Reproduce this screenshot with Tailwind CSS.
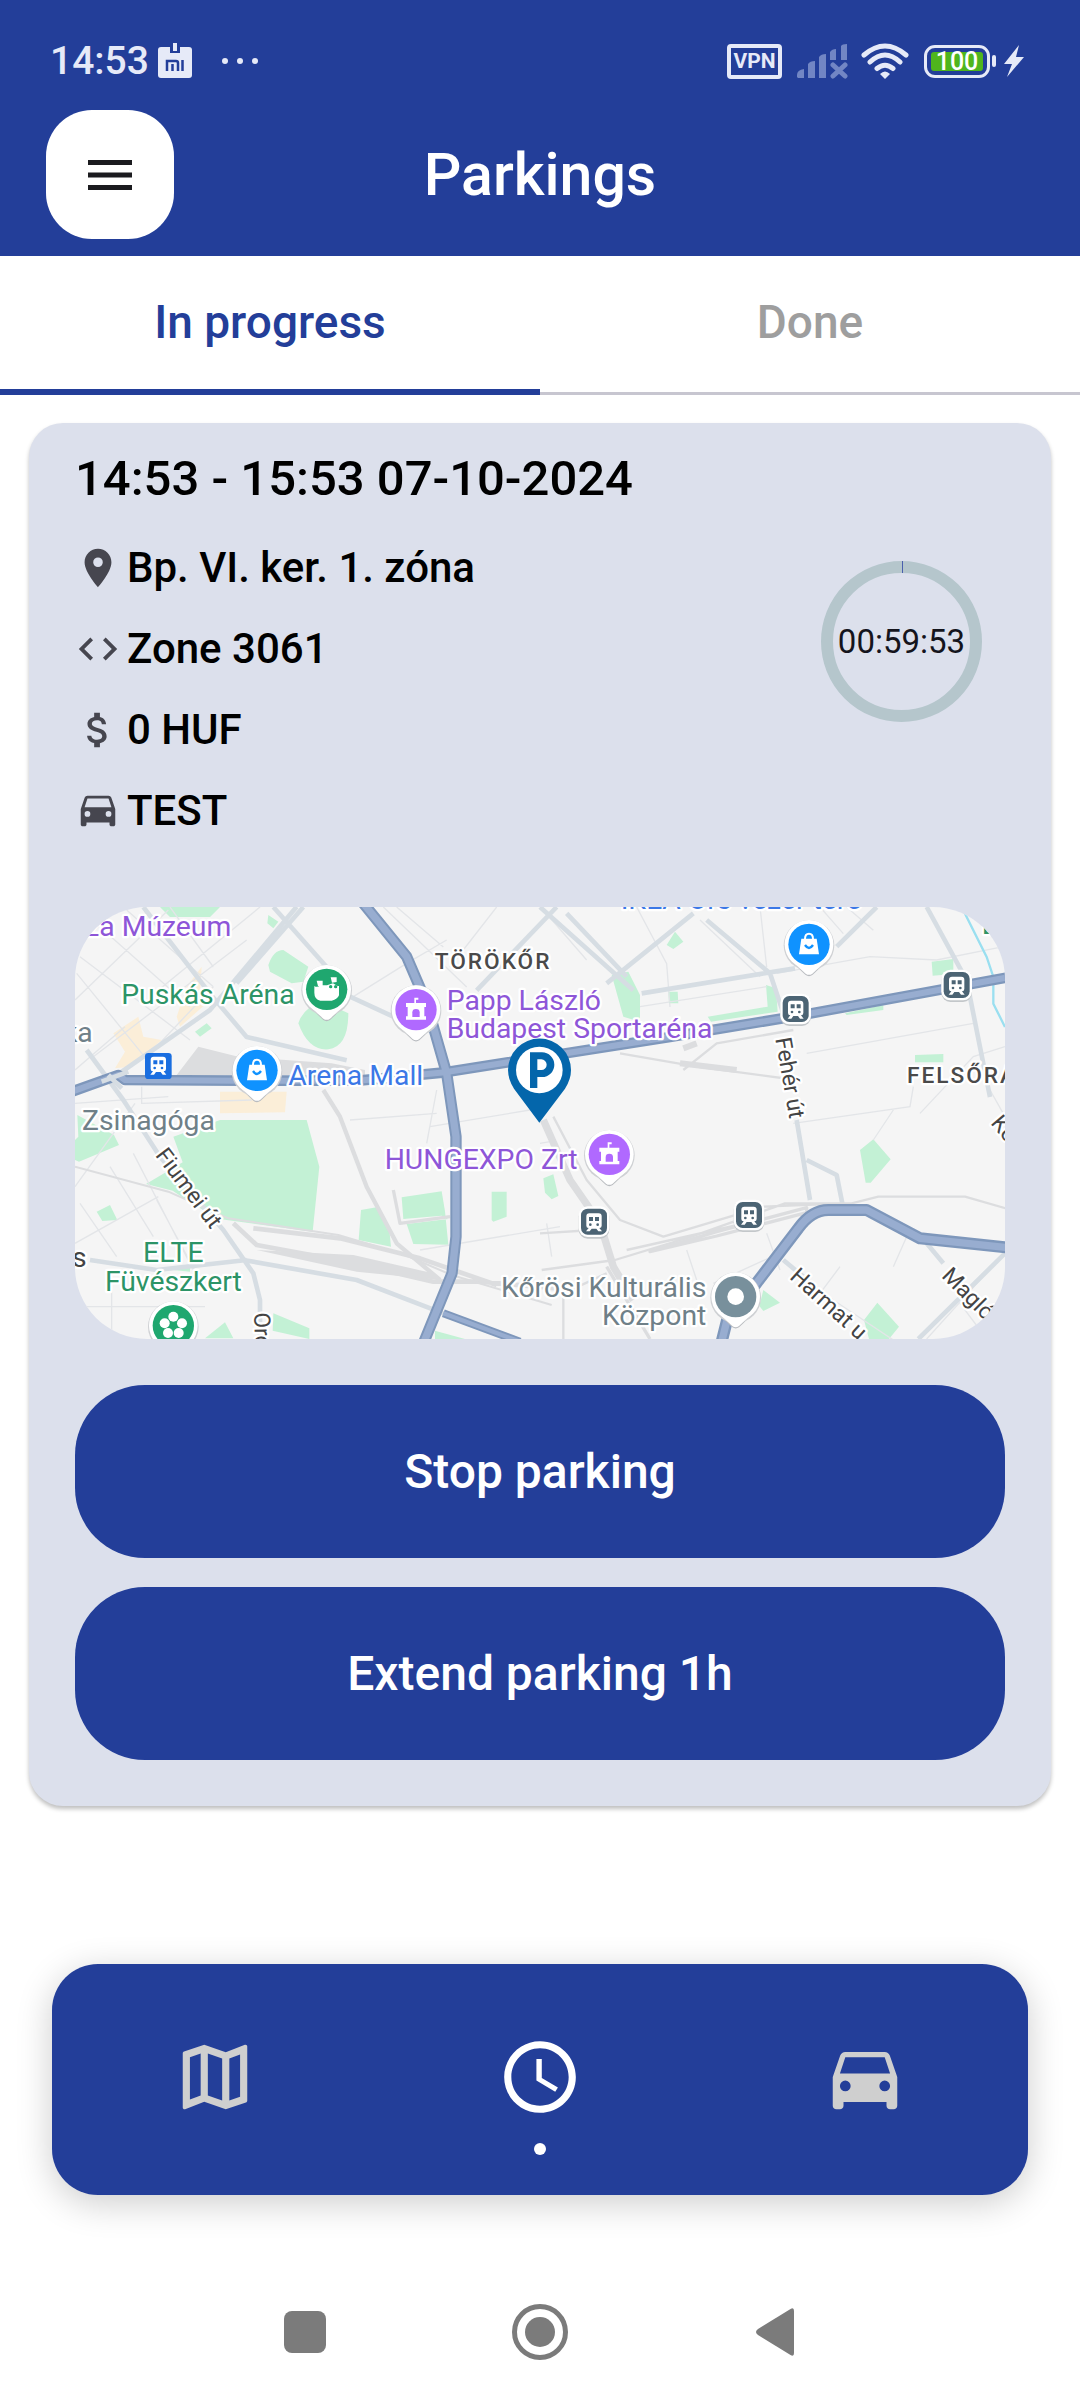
<!DOCTYPE html>
<html lang="en">
<head>
<meta charset="utf-8">
<meta name="viewport" content="width=device-width, initial-scale=1">
<title>Parkings</title>
<script src="https://cdn.jsdelivr.net/npm/@tailwindcss/browser@4"></script>
</head>
<body class="bg-white">
<div class="flex min-h-screen flex-col font-['Roboto',sans-serif] font-medium text-black">

  <header class="flex flex-col bg-[#233e99] text-white">
    <!-- status bar -->
    <div class="flex h-[110px] items-center justify-between pt-3 pr-14 pl-[50px] text-[#e6eaf8]">
      <div class="flex items-center">
        <span class="text-[39px] leading-[48px]">14:53</span>
        <svg class="ml-2 h-9 w-9" viewBox="0 0 36 36" aria-hidden="true">
          <rect x="1" y="4" width="34" height="31" rx="3" fill="currentColor"/>
          <path d="M13 3h10v7H13z" fill="#233e99"/><path d="M16 0h4v8h-4z" fill="currentColor"/>
          <path d="M10 28V18h9q2 0 2 2v8M15.500 21v7M25.500 17v11" fill="none" stroke="#233e99" stroke-width="2.500"/>
        </svg>
        <svg class="ml-7 h-2 w-10" viewBox="0 0 40 8" fill="currentColor" aria-hidden="true"><circle cx="4" cy="4" r="3"/><circle cx="19" cy="4" r="3"/><circle cx="34" cy="4" r="3"/></svg>
      </div>
      <div class="flex items-center">
        <span class="flex h-[35px] w-[55px] items-center justify-center rounded-[4px] border-4 border-[#e6eaf8] text-[21px] leading-none font-bold">VPN</span>
        <svg class="ml-[14px] h-9 w-[52px]" viewBox="0 0 52 36" fill="#7286c4" aria-hidden="true">
          <path d="M1 34v-2q0-5 7-6v9H2zM12 35V21q2-3 7-3v17zM23 35V14q2-3 7-3v24zM34 17V9q2-3 6-3v11zM45 17V3q1-2 6-2v16z"/>
          <path d="M37 22l12 11M49 22L37 33" stroke="#7286c4" stroke-width="5" stroke-linecap="round"/>
        </svg>
        <svg class="ml-3 h-9 w-[50px]" viewBox="0 0 50 36" fill="none" stroke="currentColor" stroke-width="5" stroke-linecap="round" aria-hidden="true">
          <path d="M4 12Q25-6 46 12M10 19Q25 5 40 19M17 25.500Q25 19 33 25.500"/><path d="M20 31q5-5 10 0l-5 5z" fill="currentColor" stroke="none"/>
        </svg>
        <span class="ml-[14px] flex h-[33px] w-[66px] items-center rounded-[11px] border-[3px] border-[#e6eaf8] p-1">
          <span class="flex h-full w-full items-center justify-center rounded-[3px] bg-[#4fb51d] text-[25px] leading-none text-white">100</span>
        </span>
        <span class="ml-[2px] h-3 w-1 rounded-full bg-[#e6eaf8]"></span>
        <svg class="ml-2 h-8 w-5" viewBox="0 0 20 32" fill="currentColor" aria-hidden="true"><path d="M15 0L0 19h8L3 32 20 12h-8z"/></svg>
      </div>
    </div>
    <!-- title bar -->
    <div class="grid h-[146px] grid-cols-[128px_1fr_128px] items-start px-[46px]">
      <button type="button" aria-label="Open menu" class="flex h-[129px] w-[128px] items-center justify-center rounded-[46px] bg-white text-[#1b1b1f]">
        <svg class="h-[30px] w-11" viewBox="0 0 44 30" fill="currentColor" aria-hidden="true"><path d="M0 0h44v5H0zM0 12.500h44v5H0zM0 25h44v5H0z"/></svg>
      </button>
      <h1 class="text-center text-[59px] leading-[129px]">Parkings</h1>
    </div>
  </header>

  <div role="tablist" class="grid h-[139px] grid-cols-2 text-[46px]">
    <button type="button" role="tab" aria-selected="true" class="border-b-[6px] border-[#233e99] text-[#233e99]">In progress</button>
    <button type="button" role="tab" aria-selected="false" class="border-b-[3px] border-[#c7c6d0] pb-[3px] text-[#9e9e9e]">Done</button>
  </div>

  <main class="mx-[29px] mt-7 rounded-[34px] bg-[#dce0ec] px-[46px] pt-7 pb-[46px] shadow-[0_3px_4px_rgba(0,0,0,0.25)]">
    <h2 class="text-[49px] leading-[56px]">14:53 - 15:53 07-10-2024</h2>

    <div class="mt-5 flex items-start justify-between text-[42px]">
      <ul>
        <li class="flex h-[81px] items-center gap-[6px]">
          <svg class="h-[46px] w-[46px] text-[#46464f]" viewBox="0 0 24 24" fill="currentColor" aria-hidden="true"><path d="M12 2C8.130 2 5 5.130 5 9c0 5.250 7 13 7 13s7-7.750 7-13c0-3.870-3.130-7-7-7zm0 9.500a2.500 2.500 0 1 1 0-5 2.500 2.500 0 0 1 0 5z"/></svg>
          Bp. VI. ker. 1. zóna
        </li>
        <li class="flex h-[81px] items-center gap-[6px]">
          <svg class="h-[46px] w-[46px] text-[#46464f]" viewBox="0 0 24 24" fill="currentColor" aria-hidden="true"><path d="M9.400 16.600L4.800 12l4.600-4.600L8 6l-6 6 6 6 1.400-1.400zm5.200 0l4.600-4.600-4.600-4.600L16 6l6 6-6 6-1.400-1.400z"/></svg>
          Zone 3061
        </li>
        <li class="flex h-[81px] items-center gap-[6px]">
          <svg class="h-[46px] w-[46px] text-[#46464f]" viewBox="0 0 24 24" fill="currentColor" aria-hidden="true"><path d="M11.800 10.900c-2.270-.59-3-1.200-3-2.150 0-1.090 1.010-1.850 2.700-1.850 1.780 0 2.440.85 2.500 2.100h2.210c-.07-1.720-1.120-3.300-3.210-3.810V3h-3v2.160c-1.940.42-3.500 1.680-3.500 3.610 0 2.310 1.910 3.460 4.700 4.130 2.500.6 3 1.480 3 2.410 0 .69-.49 1.790-2.700 1.790-2.060 0-2.870-.92-2.980-2.100h-2.200c.12 2.190 1.760 3.420 3.680 3.830V21h3v-2.150c1.950-.37 3.500-1.500 3.500-3.550 0-2.840-2.430-3.810-4.700-4.400z"/></svg>
          0 HUF
        </li>
        <li class="flex h-[81px] items-center gap-[6px]">
          <svg class="h-[46px] w-[46px] text-[#46464f]" viewBox="0 0 24 24" fill="currentColor" aria-hidden="true"><path d="M18.920 5.010C18.720 4.420 18.160 4 17.500 4h-11c-.66 0-1.210.42-1.420 1.010L3 11v8c0 .55.45 1 1 1h1c.55 0 1-.45 1-1v-1h12v1c0 .55.45 1 1 1h1c.55 0 1-.45 1-1v-8l-2.080-5.990zM6.500 15a1.500 1.500 0 1 1 0-3 1.500 1.500 0 0 1 0 3zm11 0a1.500 1.500 0 1 1 0-3 1.500 1.500 0 0 1 0 3zM5 10l1.500-4.500h11L19 10H5z"/></svg>
          TEST
        </li>
      </ul>
      <div role="timer" class="relative mt-[34px] mr-[23px] flex h-[161px] w-[161px] items-center justify-center rounded-full border-[12px] border-[#b5c6cc]">
        <span class="text-[33px] leading-none font-normal whitespace-nowrap text-[#14141c]">00:59:53</span>
        <span class="absolute -top-3 left-1/2 h-3 w-px bg-[#4a5fae]"></span>
      </div>
    </div>

    <div class="mt-14 overflow-hidden rounded-[72px]">
      <svg class="block w-full" viewBox="45 51 2790 1296" role="img" aria-label="Map of the parking location">
        <defs>
          <g id="pin"><path d="M-64 37Q-30 74-10 92Q0 99 10 92Q30 74 64 37z" fill="#b9bcc0"/><circle cy="3" r="76" fill="#cfd1d4"/><path d="M-60 40Q-30 70-10 88Q0 95 10 88Q30 70 60 40z" fill="#fff"/><circle r="73" fill="#fff"/></g>
          <g id="hall" fill="#fff"><path d="M-5-20v-16H7v6H0v10h30v12h-5v28h5v10h-60v-10h5V-8h-5v-12z"/><path d="M-11 22V8q0-10 11-10T11 8v14z" fill="#b069ff"/></g>
          <g id="bag"><path d="M-23-17h46l7 47h-60z" fill="#fff"/><path d="M-12-16q0-16 12-16t12 16" fill="none" stroke="#fff" stroke-width="6"/><path d="M-12 2q12 18 24 0" fill="none" stroke="#0f92ff" stroke-width="7"/></g>
          <g id="train" fill="#fff"><path d="M-23-17q0-9 9-9h28q9 0 9 9v28q0 7-7 7l8 10H13l-6-8H-7l-6 8h-11l8-10q-7 0-7-7z"/></g>
          <g id="trainwin"><path d="M-15-15h12v12h-12zM3-15h12v12H3z"/><circle cx="-11" cy="8" r="4"/><circle cx="11" cy="8" r="4"/></g>
          <g id="station"><rect x="-46" y="-44" width="92" height="94" rx="27" fill="#c3c7ca"/><rect x="-46" y="-47" width="92" height="92" rx="27" fill="#fff"/><rect x="-39" y="-40" width="78" height="78" rx="20" fill="#4c6474"/><use href="#train"/><use href="#trainwin" fill="#4c6474"/></g>
        </defs>
        <path fill="#f5f5f5" d="M45 51h2790v1296H45z"/>

        <!-- parks -->
        <g fill="#c3f1d5">
          <path d="M300 51h180l-30 30H330zM625 75l30 20-15 20-18-15zM625 225q15-45 45-45l75 50-15 45-35 5-65-35zM715 400q15-50 75-65l75 35q0 100-60 108-60 5-90-78zM405 425l35-25 15 15-35 25zM52 675l110 60 15 30-120 50-12-5v-60l10-10zM340 740l140-50h260l38 140-20 195-280-38-80-45-60-40-80-20 110-65zM110 965l40-20 22 45-45 3zM903 960l55-10 30 70 5 50-97-20zM1025 922l120-18 10 60 10 100-105-2-20-60 125-15-20-10-115 10zM1295 905h45v75l-40 15-5-5zM1450 865l30-12 15 65-20 10-20-20zM435 1345l60-48 25 48zM640 1270l108 45v32l-110-25zM1125 1322l90 25h-90zM340 1140l50-15v20zM1820 165l25-40 25 30-30 22zM1655 255l50-10 35 70v80l-50-15zM1825 305h28l2 35h-28zM2118 285l30 10 5 70-200 30-10-15 180-30zM2615 215l65-8v45l-62 5zM2565 495l85-3v25h-85zM2355 370l115-25v15l-110 15zM2400 780l40-32 52 60-60 70h-15zM2110 1200l50 38-50 25-12-15zM2412 1290l40-52 65 72-30 37h-60z"/>
        </g>
        <g fill="#fbeed8"><path d="M480 605h200l-5 62-195 3zM160 430l75-50 15 60 55 10-90 80-50 5 30-50zM350 380l30-90 45-60-5 80 20 30-80 70z"/></g>

        <!-- minor streets -->
        <g fill="none" stroke="#e3e5e8" stroke-width="4">
          <path d="M45 330l280-270M60 200l330 250M130 120l260 230M200 60l260 230M50 250l220 270M330 51l130 180M100 500L560 150M45 540l150-130M280 480l180-190M600 51l-330 270M880 320l160-100 120-70M970 51l250 240M1010 51l140 120M245 590v50l330-10M45 640l280-20M45 890l180-250M150 830l130 210M220 790l180 350M290 930l130 240M45 1060l250-140M60 940l110 160M45 1250h390M155 1200v147M870 690l260-20M1110 710l300-50M1130 600l-30 160M1080 1080l420-70M1440 760l30-5M1460 1000l15 100M1310 51l-140 180M1450 60l130 150M1730 51l90 170 10 130M1740 350l380-60M2100 51l20 180M1920 90l180 170M2150 250l280-50 200 10 200-40M2240 490l500-90M2200 700l350-50 10-60M2440 750l60-90M2280 51l70 80M2360 51l80 70M2580 670l160-170 95-30M2790 600l45 80M2120 1030l40 110M2170 1110l150 120 180 120M2280 1210l60-80M2180 1080l-220 100M1880 1080l40 120M2600 1347l235-260M2700 1240l60 80M2500 1130l40-90"/>
        </g>
        <!-- secondary roads -->
        <g fill="none" stroke="#d6dde3" stroke-width="14" stroke-linejoin="round">
          <path d="M730 51L530 280M150 570l300-210 260-310M250 51l200 260 110 130 300 70M640 51l160 180M870 320l130 60M80 480l110 150 110 170 190 220 90 130 20 80v117M90 1110l200 30 270-30M550 1110l340 60 260 100M1490 51l-240 250M1440 51l280 250M1520 70l180 190M1900 70L1640 280M1940 90l190 160 50 150M1745 310l460-75M2330 170l120-119M2600 51l120 220 70 350M2210 690l40 240M2240 810l90 45 20 100M2170 1110l60 50M2600 1060l50 60M2835 1090l-260 257"/>
        </g>

        <!-- railway yards -->
        <g fill="none" stroke="#dcdddf" stroke-linejoin="round">
          <path d="M415 470l120 30 280 20 100 20v15H350z" fill="#dcdddf" stroke="none"/>
          <path d="M520 1000l70 65 270 50 260 60h140l230 20M580 1015l260 30 240 60 230 80" stroke-width="14"/>
          <path d="M590 1080l300 65 250 25-20-20-240-55z" fill="#dcdddf" stroke="none"/>
          <path d="M45 830l280 75 180 80 330 50 200 60 140 60 300 90" stroke-width="6"/>
          <path d="M790 600l50 80 80 210 90 170 130 110" stroke-width="13"/><path d="M1450 690l80 180 90 130 40 130 60 100" stroke-width="22"/>
          <path d="M1480 680l100 190 100 120 130 50 300-90 250-10M1440 1030l160-10M1445 1140l220-30 230-70 280-100h200l80-20h260l140 40M1700 1080l400-90M1640 1150l-130 60v137M1680 490l230 40 300 40M1870 540l100-80 230-40" stroke-width="7"/>
          <path d="M1770 1085l200-60 270-72v15l-270 70z" stroke-width="10"/><path d="M1640 1130l130 217M1000 900l20 100 150-20" stroke-width="10"/>
          <path d="M1860 520l170 20M1870 475l40-15" stroke-width="18"/>
        </g>
        <path d="M2705 51l75 150 20 60v80l35 70" fill="none" stroke="#9adff0" stroke-width="7"/>

        <!-- main roads -->
        <g fill="none" stroke="#7e97bb" stroke-width="34" stroke-linejoin="round">
          <path d="M910 40l130 160 60 140 60 210 28 190v300l-12 110-90 220"/>
          <path d="M35 605l140-50 20 15 350 2h350l260-25 190-30 480-75 390-65 640-117" stroke-width="32"/>
          <path d="M1150 1270l230 85" stroke-width="24"/>
          <path d="M1985 1355l20-80 80-90 130-170q40-55 90-55h115l160 85 265 28" stroke-width="36"/>
        </g>
        <g fill="none" stroke="#98add0" stroke-width="22" stroke-linejoin="round">
          <path d="M910 40l130 160 60 140 60 210 28 190v300l-12 110-90 220"/>
          <path d="M35 605l140-50 20 15 350 2h350l260-25 190-30 480-75 390-65 640-117" stroke-width="18"/>
          <path d="M1150 1270l230 85" stroke-width="13"/>
          <path d="M1985 1355l20-80 80-90 130-170q40-55 90-55h115l160 85 265 28" stroke-width="22"/>
        </g>
        <path d="M125 575l80-30M145 555l40 40" stroke="#d6dde3" stroke-width="14"/>

        <!-- labels -->
        <g font-size="85" font-weight="400" stroke="#fff" stroke-width="14" stroke-linejoin="round" paint-order="stroke">
          <g fill="#8e56d8">
            <text x="514" y="138" text-anchor="end">za Múzeum</text>
            <text x="1160" y="360">Papp László</text><text x="1160" y="444">Budapest Sportaréna</text>
            <text x="974" y="837">HUNGEXPO Zrt</text>
          </g>
          <g fill="#2c9467">
            <text x="704" y="342" text-anchor="end">Puskás Aréna</text>
            <text x="340" y="1117" text-anchor="middle">ELTE</text><text x="340" y="1203" text-anchor="middle">Füvészkert</text>
            <text x="2765" y="133">E</text>
          </g>
          <g fill="#3b78e7"><text x="685" y="584">Arena Mall</text><text x="1682" y="58">IKEA Örs vezér tere</text></g>
          <g fill="#6f8088">
            <text x="98" y="457" text-anchor="end">ka</text><text x="66" y="720">Zsinagóga</text>
            <text x="1939" y="1221" text-anchor="end">Kőrösi Kulturális</text><text x="1939" y="1306" text-anchor="end">Központ</text>
          </g>
          <g fill="#444" font-size="68">
            <text x="36" y="1132" font-size="85">s</text>
            <text transform="translate(284 796) rotate(53)">Fiumei út</text>
            <text transform="translate(582 1268) rotate(88)">Orczy</text>
            <text transform="translate(2146 446) rotate(80)">Fehér út</text>
            <text transform="translate(2186 1164) rotate(42)">Harmat u</text>
            <text transform="translate(2642 1160) rotate(45)">Magló</text>
            <text transform="translate(2790 700) rotate(50)">Ke</text>
          </g>
          <g fill="#4a4a4a" font-size="68" font-weight="500">
            <text class="tracking-[6px]" x="1124" y="236">TÖRÖKŐR</text><text class="tracking-[6px]" x="2541" y="578">FELSŐRÁKOS</text>
          </g>
        </g>

        <!-- places -->
        <g transform="translate(800 298)"><use href="#pin"/><circle r="62" fill="#1fa76f"/><path d="M-37-10q8 6 18-2h20l18-6 14 8h4v28q-4 12-22 16h-34q-18-4-18-24zM-30-26h18v16h-14zM12-36h18v14l-14 2z" fill="#fff"/><circle cx="12" cy="-8" r="5" fill="#1fa76f"/><circle cx="27" cy="-8" r="5" fill="#1fa76f"/></g>
        <g transform="translate(1068 359)"><use href="#pin"/><circle r="62" fill="#b069ff"/><use href="#hall"/></g>
        <g transform="translate(1648 793)"><use href="#pin"/><circle r="62" fill="#b069ff"/><use href="#hall"/></g>
        <g transform="translate(591 541)"><use href="#pin"/><circle r="62" fill="#0f92ff"/><use href="#bag"/></g>
        <g transform="translate(2247 163)"><use href="#pin"/><circle r="62" fill="#0f92ff"/><use href="#bag"/></g>
        <g transform="translate(2027 1220)"><use href="#pin"/><circle r="62" fill="#78909c"/><circle r="25" fill="#fff"/></g>
        <g transform="translate(340 1307)"><use href="#pin"/><circle r="62" fill="#1fa76f"/><g fill="#fff"><circle cy="-27" r="15"/><circle cx="26" cy="-7" r="15"/><circle cx="-26" cy="-7" r="15"/><circle cx="16" cy="22" r="15"/><circle cx="-16" cy="22" r="15"/></g></g>
        <rect x="255" y="489" width="80" height="78" rx="10" fill="#1a6ee0"/>
        <g transform="translate(295 526)"><use href="#train"/><use href="#trainwin" fill="#1a6ee0"/></g>
        <use href="#station" x="2207" y="358"/><use href="#station" x="2690" y="286"/><use href="#station" x="1602" y="996"/><use href="#station" x="2067" y="976"/>

        <!-- parked car position -->
        <path d="M1438 698L1362 596Q1344 568 1344 540a94 94 0 0 1 189 0q0 28-18 56z" fill="#0466ab"/>
        <circle cx="1438" cy="540" r="70" fill="#fff"/>
        <path d="M1410 487h36a37 37 0 0 1 0 74h-14v33h-22zM1432 508v32h12a16 16 0 0 0 0-32z" fill="#0466ab" fill-rule="evenodd"/>
      </svg>
    </div>

    <div class="mt-[46px] flex flex-col gap-[29px] text-[48px] text-white">
      <button type="button" class="h-[173px] rounded-[70px] bg-[#233e99]">Stop parking</button>
      <button type="button" class="h-[173px] rounded-[70px] bg-[#233e99]">Extend parking 1h</button>
    </div>
  </main>

  <nav aria-label="Main" class="mx-[52px] mt-auto grid h-[231px] grid-cols-3 rounded-[46px] bg-[#233e99] text-[#cfcfcf] shadow-[0_8px_36px_rgba(0,0,0,0.2)]">
    <a href="#map" aria-label="Map" class="flex flex-col items-center pt-[70px]">
      <svg class="h-[86px] w-[86px]" viewBox="0 0 24 24" fill="currentColor" aria-hidden="true"><path d="M20.500 3l-.16.03L15 5.100 9 3 3.360 4.900c-.21.07-.36.25-.36.48V20.500c0 .28.22.5.5.5l.16-.03L9 18.900l6 2.100 5.640-1.900c.21-.07.36-.25.36-.48V3.500c0-.28-.22-.5-.5-.5zM10 5.470l4 1.400v11.660l-4-1.400V5.470zm-5 .99l3-1.010v11.700l-3 1.160V6.460zm14 11.080l-3 1.010V6.860l3-1.160v11.840z"/></svg>
    </a>
    <a href="#parkings" aria-label="Parkings" aria-current="page" class="flex flex-col items-center pt-[70px] text-white">
      <svg class="h-[86px] w-[86px]" viewBox="0 0 24 24" fill="currentColor" aria-hidden="true"><path d="M11.990 2C6.470 2 2 6.480 2 12s4.470 10 9.990 10C17.520 22 22 17.520 22 12S17.520 2 11.990 2zM12 20c-4.420 0-8-3.580-8-8s3.580-8 8-8 8 3.580 8 8-3.580 8-8 8zm.5-13H11v6l5.250 3.150.75-1.230-4.500-2.670z"/></svg>
      <span class="mt-[23px] h-3 w-3 rounded-full bg-white"></span>
    </a>
    <a href="#cars" aria-label="Cars" class="flex flex-col items-center pt-[70px]">
      <svg class="h-[86px] w-[86px]" viewBox="0 0 24 24" fill="currentColor" aria-hidden="true"><path d="M18.920 6.010C18.720 5.420 18.160 5 17.500 5h-11c-.66 0-1.210.42-1.420 1.010L3 12v8c0 .55.45 1 1 1h1c.55 0 1-.45 1-1v-1h12v1c0 .55.45 1 1 1h1c.55 0 1-.45 1-1v-8l-2.080-5.990zM6.500 16a1.500 1.500 0 1 1 0-3 1.500 1.500 0 0 1 0 3zm11 0a1.500 1.500 0 1 1 0-3 1.500 1.500 0 0 1 0 3zM5 11l1.500-4.500h11L19 11H5z"/></svg>
    </a>
  </nav>

  <!-- system navigation -->
  <div class="mt-[69px] flex h-[136px] justify-center text-[#7b7b7b]">
    <button type="button" aria-label="Recent apps" class="flex w-[235px] items-center justify-center"><svg class="h-[42px] w-[42px]" viewBox="0 0 42 42" fill="currentColor" aria-hidden="true"><rect width="42" height="42" rx="8"/></svg></button>
    <button type="button" aria-label="Home" class="flex w-[235px] items-center justify-center"><svg class="h-14 w-14" viewBox="0 0 56 56" fill="currentColor" aria-hidden="true"><circle cx="28" cy="28" r="15"/><circle cx="28" cy="28" r="25.500" fill="none" stroke="currentColor" stroke-width="5"/></svg></button>
    <button type="button" aria-label="Back" class="flex w-[235px] items-center justify-center"><svg class="h-12 w-[38px]" viewBox="0 0 38 48" fill="currentColor" aria-hidden="true"><path d="M34.500 1Q38-1 38 3v42q0 4-3.500 2L2 27q-4-3 0-6z"/></svg></button>
  </div>
</div>
</body>
</html>
